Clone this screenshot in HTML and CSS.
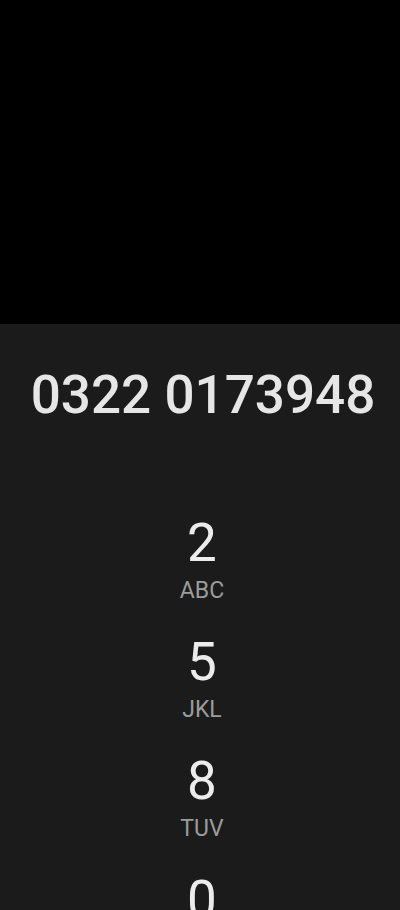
FILE: index.html
```html
<!DOCTYPE html>
<html>
<head>
<meta charset="utf-8">
<link rel="stylesheet" href="styles.css">
</head>
<body>
<div class="top"></div>
<main class="dialer">
  <div class="number">0322 0173948</div>
  <div class="keys">
    <div class="key"><span class="digit">2</span><span class="letters">ABC</span></div>
    <div class="key"><span class="digit">5</span><span class="letters">JKL</span></div>
    <div class="key"><span class="digit">8</span><span class="letters">TUV</span></div>
    <div class="key"><span class="digit">0</span></div>
  </div>
</main>
</body>
</html>
```
FILE: styles.css
```css
html, body {
  margin: 0;
  padding: 0;
  height: 910px;
  overflow: hidden;
  background: #1b1b1b;
  font-family: Roboto, "Noto Sans", sans-serif;
}
.top {
  height: 324px;
  background: #000;
}
.dialer {
  display: flex;
  flex-direction: column;
  align-items: center;
  padding-top: 39px;
}
.number {
  font-size: 53px;
  line-height: 64px;
  font-weight: 500;
  color: #e6e6e6;
  padding-left: 6px;
}
.keys {
  margin-top: 86px;
  display: flex;
  flex-direction: column;
  align-items: center;
  gap: 27px;
  padding-left: 4px;
}
.key {
  display: flex;
  flex-direction: column;
  align-items: center;
}
.digit {
  font-size: 53px;
  line-height: 60px;
  color: #ececec;
}
.letters {
  margin-top: 4px;
  font-size: 23px;
  line-height: 28px;
  color: #9c9c9c;
}
```
